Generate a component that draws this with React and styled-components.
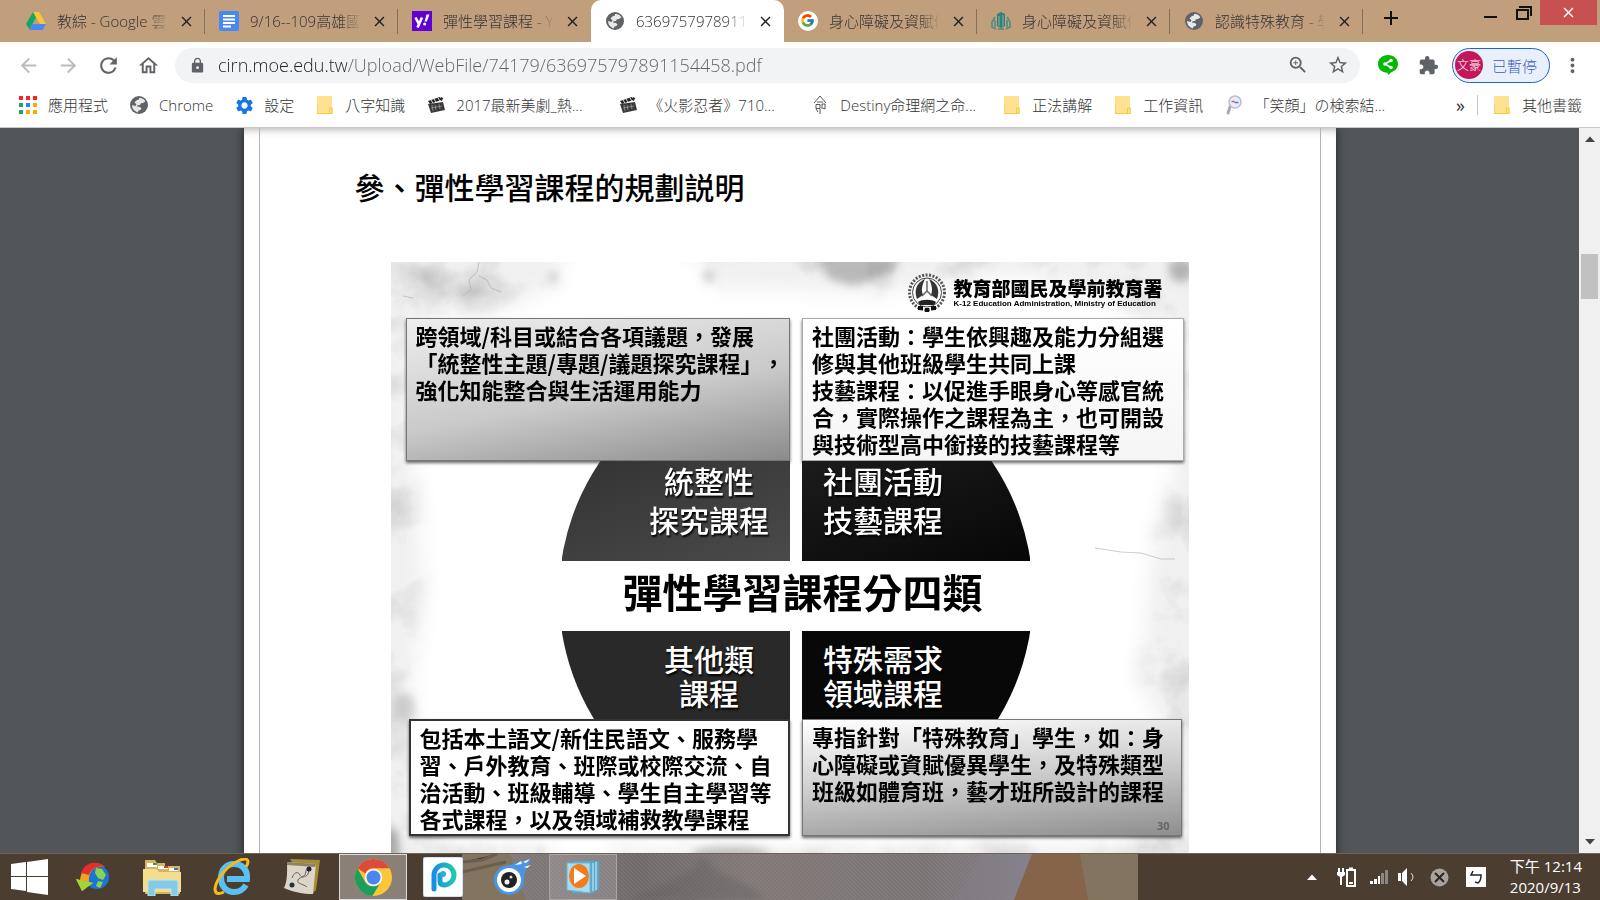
import React from 'react'
import styled, { createGlobalStyle } from 'styled-components'
import {
  MdArrowBack, MdArrowForward, MdRefresh, MdOutlineHome, MdLock, MdZoomIn,
  MdStarBorder, MdExtension, MdMoreVert, MdSettings, MdClose, MdAdd,
} from 'react-icons/md'
import { FcGoogle } from 'react-icons/fc'

const GlobalStyle = createGlobalStyle`
  * { box-sizing: border-box; }
  body {
    margin: 0;
    font-family: "Open Sans", "Noto Sans CJK TC", sans-serif;
    font-size: 15px;
    font-weight: 300;
    color: #333;
  }
  button { font: inherit; color: inherit; border: 0; padding: 0; background: none; }
  a { color: inherit; text-decoration: none; }
  svg { display: block; flex: none; }
`
const Screen = styled.div`
  display: flex;
  flex-direction: column;
  height: 100vh;
  overflow: hidden;
  background: #fff;
`

/* browser chrome */
const TabStrip = styled.div`
  display: flex;
  height: 42px;
  padding-left: 12px;
  background: #c19f7d;
`
const TabBox = styled.div`
  flex: 0 1 193px;
  position: relative;
  display: flex;
  align-items: center;
  gap: 11px;
  min-width: 0;
  padding: 0 10px 0 14px;
  border-radius: 10px 10px 0 0;
  background: ${p => p.$active ? '#fff' : 'none'};
  &::after {
    content: '';
    position: absolute;
    right: 0;
    top: 9px;
    width: 1px;
    height: 25px;
    background: ${p => p.$line ? '#866f58' : 'none'};
  }
`
const TabLink = styled.a`
  flex: 1;
  display: flex;
  align-items: center;
  gap: 11px;
  min-width: 0;
`
const TabTitle = styled.span`
  flex: 1;
  overflow: hidden;
  white-space: nowrap;
  line-height: 24px;
  mask-image: linear-gradient(90deg, #000 82%, rgba(0, 0, 0, .15));
`
const IconButton = styled.button`
  display: grid;
  place-items: center;
  width: ${p => p.$w || 40}px;
  height: 36px;
  color: ${p => p.$color || '#5f6368'};
`
const CloseTab = styled(IconButton)`
  width: 18px;
  color: #222;
`
const WindowControls = styled.div`
  display: flex;
  align-items: flex-start;
  margin-left: auto;
  padding-right: 3px;
`
const WindowButton = styled.button`
  display: grid;
  place-items: center;
  width: ${p => p.$close ? 57 : 33}px;
  height: 25px;
  color: ${p => p.$close ? '#fff' : '#111'};
  background: ${p => p.$close ? '#c75050' : 'none'};
`
const Toolbar = styled.div`
  display: flex;
  align-items: center;
  height: 46px;
  padding: 0 8px;
`
const Omnibox = styled.label`
  flex: 1;
  display: flex;
  align-items: center;
  height: 35px;
  margin: 0 8px 0 7px;
  padding: 0 2px 0 14px;
  border-radius: 18px;
  background: #f1f3f4;
  color: #5f6368;
`
const Address = styled.input`
  flex: 1;
  min-width: 0;
  height: 30px;
  margin-left: 12px;
  padding: 0;
  border: 0;
  outline: 0;
  font: 300 18px "Open Sans", sans-serif;
  color: transparent;
  background: linear-gradient(90deg, #202124 129px, #5f6368 129px);
  background-clip: text;
`
const Profile = styled.button`
  display: flex;
  align-items: center;
  justify-content: space-between;
  width: 98px;
  height: 35px;
  margin: 0 2px 0 4px;
  padding: 0 12px 0 2px;
  border: 1px solid #1a66d0;
  border-radius: 18px;
  background: #e9f0fc;
  color: #3c5fc0;
`
const Avatar = styled.span`
  display: grid;
  place-items: center;
  width: 28px;
  height: 28px;
  border-radius: 50%;
  background: #c2185b;
  color: #fff;
  font-size: 12px;
`
const Bookmarks = styled.nav`
  display: flex;
  align-items: center;
  height: 40px;
  padding: 0 18px 5px;
  border-bottom: 1px solid #c8c8c8;
`
const Bookmark = styled.a`
  display: flex;
  align-items: center;
  gap: 10px;
  margin-right: ${p => p.$long ? 20 : 21}px;
  white-space: nowrap;
  &:last-child { margin: 0; }
`
const BookmarkIcon = styled.span`
  width: 20px;
  display: grid;
  place-items: center;
`
const BookmarkText = styled.span`
  width: ${p => p.$long ? '142px' : 'auto'};
  line-height: 24px;
`
const More = styled.button`
  margin-left: auto;
  padding-right: 12px;
  font-size: 18px;
  font-weight: 400;
  line-height: 24px;
`
const Divider = styled.span`
  width: 1px;
  height: 20px;
  margin-right: 14px;
  background: #c4c7cb;
`

/* document */
const Viewer = styled.div`
  flex: 1;
  display: flex;
  min-height: 0;
  background: #525659;
`
const Canvas = styled.main`
  flex: 1;
  overflow: hidden;
`
const Page = styled.article`
  max-width: 1092px;
  min-height: 100%;
  margin: 0 auto;
  padding: 0 15px;
  background: #fff;
  box-shadow: 0 0 9px #222, inset 0 8px 8px -7px #aaa;
`
const PageInner = styled.div`
  padding: 38px 131px 0;
  border: solid #b4b4b4;
  border-width: 0 1px;
`
const Heading = styled.h1`
  margin: 0 0 56px -36px;
  font-family: "Noto Sans CJK TC", sans-serif;
  font-size: 30px;
  font-weight: 500;
  line-height: 40px;
  color: #000;
`
const Slide = styled.section`
  position: relative;
  isolation: isolate;
  height: 604px;
  font-family: "Noto Sans CJK TC", sans-serif;
  text-spacing-trim: space-all;
  color: #000;
`
const Marble = styled.svg`
  position: absolute;
  inset: 0;
  z-index: -1;
  width: 100%;
  height: 100%;
`
const SlideHeader = styled.header`
  display: flex;
  justify-content: flex-end;
  align-items: center;
  gap: 7px;
  height: 56px;
  padding: 6px 26px 0 0;
`
const Ministry = styled.div`
  font-size: 19px;
  font-weight: 900;
  line-height: 22px;
`
const MinistryEn = styled.div`
  font-family: "Liberation Sans", sans-serif;
  font-size: 8px;
  font-weight: 700;
  line-height: 10px;
`
const Pair = styled.div`
  display: grid;
  grid-template-columns: 385fr 382fr;
  gap: 12px;
  padding: 0 5px 0 15px;
`
const Note = styled.div`
  position: relative;
  min-height: ${p => p.$low ? 117 : 143}px;
  margin: ${p => p.$inset || '0'};
  padding: 3px 0 0 9px;
  border: ${p => p.$border || '1px solid #777'};
  background: ${p => p.$bg};
  box-shadow: 0 2px 3px rgba(0, 0, 0, .6);
  font-size: 22px;
  font-weight: 700;
  line-height: 27px;
  white-space: nowrap;
`
const Line = styled.div``
const PageNumber = styled.span`
  position: absolute;
  right: 11px;
  bottom: 2px;
  font-family: "Open Sans", sans-serif;
  font-size: 11px;
  line-height: 14px;
  color: #666;
`
const Wedge = styled.div`
  display: flex;
  flex-direction: column;
  justify-content: ${p => p.$low ? 'center' : 'flex-start'};
  align-items: ${p => p.$right ? 'flex-start' : 'flex-end'};
  justify-self: ${p => p.$right ? 'start' : 'end'};
  width: 228px;
  height: ${p => p.$low ? 88 : 100}px;
  padding: 0 20px;
  background: ${p => p.$bg};
  clip-path: circle(237px at ${p => p.$right ? '-6px' : '234px'} ${p => p.$low ? '-36px' : '134px'});
  color: #fff;
  font-size: 30px;
  font-weight: 500;
  line-height: ${p => p.$low ? 34 : 39}px;
  text-align: center;
  text-shadow: 1px 2px 2px #000;
`
const WedgeLabel = styled.div`
  min-width: 122px;
`
const SlideTitle = styled.h2`
  margin: 0;
  font-size: 40px;
  font-weight: 700;
  line-height: 60px;
  height: 70px;
  text-align: center;
  padding-left: 26px;
`
const Scrollbar = styled.div`
  display: flex;
  flex-direction: column;
  align-items: center;
  width: 21px;
  padding: 8px 0;
  background: #f0f0f0;
`
const Thumb = styled.div`
  width: 17px;
  height: 45px;
  margin: 112px 0 auto;
  background: #c1c1c1;
`

/* taskbar */
const TaskbarBox = styled.footer`
  position: relative;
  isolation: isolate;
  display: flex;
  height: 47px;
  border-top: 1px solid #6f6357;
  background: #4c3d31;
  color: #fff;
`
const Wallpaper = styled.svg`
  position: absolute;
  z-index: -1;
  left: 462px;
  top: 0;
`
const TaskButton = styled.button`
  display: grid;
  place-items: center;
  width: ${p => p.$start ? 59 : 68}px;
  margin-right: ${p => p.$start ? 0 : 2}px;
  border: 1px solid ${p => p.$active ? '#ddd' : p.$open ? '#aaa5a2' : 'transparent'};
  background: ${p => p.$active ? '#8b8078' : p.$open ? 'rgba(255,255,255,.15)' : 'none'};
`
const Tray = styled.div`
  display: flex;
  align-items: center;
  margin-left: auto;
  padding-right: 18px;
`
const TrayButton = styled.button`
  display: grid;
  place-items: center;
  width: ${p => p.$w}px;
  height: 40px;
`
const Clock = styled.div`
  margin-left: 8px;
  line-height: 21px;
  font-weight: 400;
`

const Globe = () => (
  <svg width="20" height="20" viewBox="0 0 20 20">
    <circle cx="10" cy="10" r="9" fill="#5f6368" />
    <path d="M10 3c3-.3 5.400 1 6.300 3.500L14 8l-2 .2-1 1.800-2.500.2-.5 1.300 3 .5 1.500 1.600-1 1.400-2 .6-.7 1.800C5.500 16.500 3 13.500 3 10l3.500 1 1-1.500-2-2.200L8 5l2-.4z" fill="#fff" opacity=".85" />
  </svg>
)
const Drive = () => (
  <svg width="20" height="18" viewBox="0 0 20 18">
    <path d="M7 0h6l7 12h-6z" fill="#fbc834" />
    <path d="M7 0l3 5.500L3.500 17.500 0 12z" fill="#11a861" />
    <path d="M6.500 12H20l-3.500 6h-13z" fill="#4688f4" />
  </svg>
)
const Docs = () => (
  <svg width="20" height="20" viewBox="0 0 20 20">
    <rect width="20" height="20" rx="2" fill="#4688f4" />
    <path d="M4 5h12M4 8.500h12M4 12h12M4 15.500h8" stroke="#fff" strokeWidth="1.800" />
  </svg>
)
const Yahoo = () => (
  <svg width="20" height="20" viewBox="0 0 20 20">
    <rect width="20" height="20" fill="#5f01d1" />
    <path d="M3.500 6.500l3.200 6M10 6.500L5.500 16.500" stroke="#fff" strokeWidth="2.600" />
    <path d="M14.500 3.500h3l-2.700 7h-2.200z" fill="#fff" />
    <circle cx="12.600" cy="13" r="1.500" fill="#fff" />
  </svg>
)
const GoogleMark = () => (
  <svg width="20" height="20" viewBox="0 0 20 20">
    <circle cx="10" cy="10" r="10" fill="#fff" />
    <FcGoogle x="2" y="2" width="16" height="16" />
  </svg>
)
const School = () => (
  <svg width="20" height="20" viewBox="0 0 20 20">
    <path d="M6 3l4-2 4 2v12l-4 2-4-2z" fill="#2f8276" />
    <path d="M8 5v10M12 4v11" stroke="#8fb0a0" />
    <path d="M4 6L1 11v5l4 2M16 6l3 5v5l-4 2M4 9v7M16 9v7M7 18h6" stroke="#4e8d7f" strokeWidth="1.600" fill="none" />
  </svg>
)
const Apps = () => (
  <svg width="18" height="18" viewBox="0 0 18 18">
    {['#f22', '#f22', '#f22', '#1ea362', '#2684fc', '#fbab00', '#1ea362', '#fbab00', '#fbab00'].map((c, i) => (
      <rect key={i} x={(i % 3) * 7} y={Math.floor(i / 3) * 7} width="4" height="4" fill={c} />
    ))}
  </svg>
)
const Folder = () => (
  <svg width="16" height="18" viewBox="0 0 16 18">
    <path d="M0 0h15v11l1 1v6H0z" fill="#ffe291" />
    <path d="M0 8v9.500h13M12.500 17v-4a1 1 0 0 1 2.500 0v4.500h-2" fill="none" stroke="#f2ca3c" />
  </svg>
)
const Clapper = () => (
  <svg width="18" height="18" viewBox="0 0 18 18">
    <path d="M1 5l12-4 1 3L3 8zM14 1l2 1-1 3-2-1z" fill="#222" />
    <path d="M1 8l15-2 2 8-14 3z" fill="#3a3a3a" />
    <path d="M4 4l2 3M7 3l2 3M11 2l2 3" stroke="#ddd" />
    <path d="M5 9l1 6M8 9l1 5M12 8l1 5M4 12l11-2" stroke="#999" strokeWidth=".8" />
  </svg>
)
const Fate = () => (
  <svg width="14" height="20" viewBox="0 0 14 20" fill="none" stroke="#555">
    <path d="M7 1L1 8M7 1l6 7M4 7h6M3 9.500h4v4H3zM9 9h3v5l-2-1M9 9v5M7 14v5M3 14l2 3" />
  </svg>
)
const Lens = () => (
  <svg width="16" height="20" viewBox="0 0 16 20">
    <path d="M4 12L2 18" stroke="#a9a9b5" strokeWidth="3" strokeLinecap="round" />
    <circle cx="9" cy="7" r="6" fill="#e9ebf5" stroke="#b9bccb" strokeWidth="1.500" />
    <path d="M5.500 6.500h3" stroke="#d55" strokeWidth="1.500" /><path d="M8.500 7.500h4" stroke="#57b" strokeWidth="1.500" />
  </svg>
)
const ShareBubble = () => (
  <svg width="20" height="20" viewBox="0 0 20 20">
    <path d="M10 0c6 0 10 4 10 9 0 4-3 7-7 8.500L10 20l-.5-2.300C4 17.500 0 14 0 9s4-9 10-9z" fill="#00b900" />
    <path d="M13 5.500L7 9l6 3.500" stroke="#fff" strokeWidth="1.500" fill="none" />
    <circle cx="13" cy="5.500" r="1.800" fill="#fff" /><circle cx="7" cy="9" r="1.800" fill="#fff" /><circle cx="13" cy="12.500" r="1.800" fill="#fff" />
  </svg>
)
const Emblem = () => (
  <svg width="38" height="40" viewBox="0 0 38 40" fill="none">
    <circle cx="19" cy="19.500" r="17.500" stroke="#555" strokeWidth="3" strokeDasharray="2 1.500" />
    <circle cx="19" cy="19.500" r="14.500" stroke="#444" />
    <path d="M17 6C8 10 6 18 9 26l6-4c-2-5-1-10 2-16zM21 6c9 4 11 12 8 20l-6-4c2-5 1-10-2-16z" fill="#333" />
    <path d="M19 8v10l-5 5M19 18l5 5" stroke="#666" strokeWidth="1.500" />
    <path d="M10 29c4-3 14-3 18 0l-2 3H12z" fill="#222" />
    <path d="M10 35h5M17 37h4M23 35h5" stroke="#111" strokeWidth="4" />
  </svg>
)
const Triangle = ({ down, color = '#444' }) => (
  <svg width="10" height="6" viewBox="0 0 10 6">
    <path d={down ? 'M0 0h10L5 5.500z' : 'M0 6h10L5 .5z'} fill={color} />
  </svg>
)

const MarbleArt = () => (
  <Marble viewBox="0 0 798 604" preserveAspectRatio="none" aria-hidden="true">
    <defs>
      <filter id="grain" x="0" y="0" width="100%" height="100%">
        <feTurbulence type="fractalNoise" baseFrequency=".018" numOctaves="5" seed="8" />
        <feColorMatrix values="0 0 0 0 .5  0 0 0 0 .5  0 0 0 0 .5  1.600 0 0 0 -.72" />
      </filter>
      <filter id="soft"><feGaussianBlur stdDeviation="10" /></filter>
      <filter id="edge"><feGaussianBlur stdDeviation="4" /></filter>
      <mask id="rim">
        <g filter="url(#soft)" fill="#fff">
          <path d="M-30-30H168V20L120 45 20 58V180L32 320 20 420 28 560 60 582H160V640H-30z" />
          <path d="M285-30H830V640H220V585L480 590 600 582 740 585 786 500 750 420 760 300 786 200V60L640 12 480 30 330 26z" />
        </g>
      </mask>
    </defs>
    <rect width="798" height="604" fill="#fff" />
    <g mask="url(#rim)">
      <rect width="798" height="604" fill="#f0f0f0" />
      <rect width="798" height="604" filter="url(#grain)" />
    </g>
    <g filter="url(#edge)" fill="#777">
      <path d="M430-6h80l-8 16-40 14-26-8z" opacity=".45" />
      <ellipse cx="790" cy="8" rx="12" ry="12" opacity=".5" />
      <ellipse cx="318" cy="14" rx="6" ry="6" opacity=".35" />
      <ellipse cx="35" cy="14" rx="4" ry="6" opacity=".4" />
      <ellipse cx="162" cy="15" rx="5" ry="5" opacity=".35" />
      <ellipse cx="78" cy="30" rx="12" ry="4" opacity=".3" />
      <ellipse cx="12" cy="445" rx="12" ry="14" opacity=".3" />
      <ellipse cx="340" cy="592" rx="40" ry="8" opacity=".4" />
      <ellipse cx="0" cy="585" rx="8" ry="20" opacity=".6" />
    </g>
    <path d="M88 0l-2 10-8 8 2 10-8 6M88 14l8 4 4 8 10 4M12 34l10 2M704 286l26 4 20 1 20 6 14 0" stroke="#aaa" fill="none" opacity=".6" />
  </Marble>
)

const tabs = [
  { title: '教綜 - Google 雲', icon: <Drive />, line: true },
  { title: '9/16--109高雄國', icon: <Docs />, line: true },
  { title: '彈性學習課程 - Y', icon: <Yahoo /> },
  { title: '6369757978911', icon: <Globe />, active: true },
  { title: '身心障礙及資賦優', icon: <GoogleMark />, line: true },
  { title: '身心障礙及資賦優', icon: <School />, line: true },
  { title: '認識特殊教育 - 學', icon: <Globe />, line: true },
]
const bookmarks = [
  { text: '應用程式', icon: <Apps /> },
  { text: 'Chrome', icon: <Globe /> },
  { text: '設定', icon: <MdSettings size={21} color="#1a73e8" /> },
  { text: '八字知識', icon: <Folder /> },
  { text: '2017最新美劇_熱...', icon: <Clapper />, long: true },
  { text: '《火影忍者》710...', icon: <Clapper />, long: true },
  { text: 'Destiny命理網之命...', icon: <Fate />, long: true },
  { text: '正法講解', icon: <Folder /> },
  { text: '工作資訊', icon: <Folder /> },
  { text: '「笑顔」の検索結...', icon: <Lens /> },
]
const notes = {
  inquiry: ['跨領域/科目或結合各項議題，發展', '「統整性主題/專題/議題探究課程」，', '強化知能整合與生活運用能力'],
  clubs: ['社團活動：學生依興趣及能力分組選', '修與其他班級學生共同上課', '技藝課程：以促進手眼身心等感官統', '合，實際操作之課程為主，也可開設', '與技術型高中銜接的技藝課程等'],
  others: ['包括本土語文/新住民語文、服務學', '習、戶外教育、班際或校際交流、自', '治活動、班級輔導、學生自主學習等', '各式課程，以及領域補救教學課程'],
  special: ['專指針對「特殊教育」學生，如：身', '心障礙或資賦優異學生，及特殊類型', '班級如體育班，藝才班所設計的課程'],
}

const Lines = ({ of }) => of.map(text => <Line key={text}>{text}</Line>)

const Tab = ({ title, icon, active, line }) => (
  <TabBox $active={active} $line={line}>
    <TabLink href="#">
      {icon}
      <TabTitle>{title}</TabTitle>
    </TabLink>
    <CloseTab aria-label="關閉分頁"><MdClose size={17} /></CloseTab>
  </TabBox>
)

const Browser = () => (
  <header>
    <TabStrip>
      {tabs.map((tab, i) => <Tab key={i} {...tab} />)}
      <IconButton $w={56} $color="#111" aria-label="新分頁"><MdAdd size={24} /></IconButton>
      <WindowControls>
        <WindowButton aria-label="最小化">
          <svg width="14" height="14"><path d="M0 11h13" stroke="#111" strokeWidth="2" /></svg>
        </WindowButton>
        <WindowButton aria-label="還原">
          <svg width="16" height="14" fill="none" stroke="#111" strokeWidth="2">
            <path d="M1 4h11v9H1zM3 1h12v9" />
          </svg>
        </WindowButton>
        <WindowButton $close aria-label="關閉"><MdClose size={17} /></WindowButton>
      </WindowControls>
    </TabStrip>
    <Toolbar>
      <IconButton $color="#bbbcbe" aria-label="上一頁"><MdArrowBack size={23} /></IconButton>
      <IconButton $color="#bbbcbe" aria-label="下一頁"><MdArrowForward size={23} /></IconButton>
      <IconButton aria-label="重新載入"><MdRefresh size={25} /></IconButton>
      <IconButton aria-label="首頁"><MdOutlineHome size={23} /></IconButton>
      <Omnibox>
        <MdLock size={17} />
        <Address aria-label="網址" defaultValue="cirn.moe.edu.tw/Upload/WebFile/74179/636975797891154458.pdf" />
        <IconButton aria-label="縮放"><MdZoomIn size={22} /></IconButton>
        <IconButton aria-label="加入書籤"><MdStarBorder size={22} /></IconButton>
      </Omnibox>
      <IconButton aria-label="分享"><ShareBubble /></IconButton>
      <IconButton aria-label="擴充功能"><MdExtension size={21} /></IconButton>
      <Profile><Avatar>文豪</Avatar>已暫停</Profile>
      <IconButton aria-label="選單"><MdMoreVert size={23} /></IconButton>
    </Toolbar>
    <Bookmarks>
      {bookmarks.map(b => (
        <Bookmark href="#" key={b.text} $long={b.long}>
          <BookmarkIcon>{b.icon}</BookmarkIcon>
          <BookmarkText $long={b.long}>{b.text}</BookmarkText>
        </Bookmark>
      ))}
      <More>»</More>
      <Divider />
      <Bookmark href="#">
        <BookmarkIcon><Folder /></BookmarkIcon>
        <BookmarkText>其他書籤</BookmarkText>
      </Bookmark>
    </Bookmarks>
  </header>
)

const Document = () => (
  <Page>
    <PageInner>
      <Heading>參、彈性學習課程的規劃説明</Heading>
      <Slide>
        <MarbleArt />
        <SlideHeader>
          <Emblem />
          <div>
            <Ministry>教育部國民及學前教育署</Ministry>
            <MinistryEn>K-12 Education Administration, Ministry of Education</MinistryEn>
          </div>
        </SlideHeader>
        <Pair>
          <Note $bg="linear-gradient(170deg, #eee, #c9c9c9 55%, #8b8b8b)"><Lines of={notes.inquiry} /></Note>
          <Note $bg="linear-gradient(#fff, #f5f5f5)" $border="1px solid #aaa"><Lines of={notes.clubs} /></Note>
        </Pair>
        <Pair>
          <Wedge $bg="linear-gradient(160deg, #333, #4a4a4a)">
            <WedgeLabel>統整性<br />探究課程</WedgeLabel>
          </Wedge>
          <Wedge $right $bg="linear-gradient(160deg, #1c1c1c, #070707)">
            <WedgeLabel>社團活動<br />技藝課程</WedgeLabel>
          </Wedge>
        </Pair>
        <SlideTitle>彈性學習課程分四類</SlideTitle>
        <Pair>
          <Wedge $low $bg="#292929">
            <WedgeLabel>其他類<br />課程</WedgeLabel>
          </Wedge>
          <Wedge $low $right $bg="#080808">
            <WedgeLabel>特殊需求<br />領域課程</WedgeLabel>
          </Wedge>
        </Pair>
        <Pair>
          <Note $low $bg="#fff" $border="2px solid #333" $inset="0 0 0 3px"><Lines of={notes.others} /></Note>
          <Note $low $bg="linear-gradient(175deg, #fff, #ccc 50%, #8e8e8e)" $inset="0 2px 0 0">
            <Lines of={notes.special} />
            <PageNumber>30</PageNumber>
          </Note>
        </Pair>
      </Slide>
    </PageInner>
  </Page>
)

const Taskbar = () => (
  <TaskbarBox>
    <Wallpaper width="676" height="46" viewBox="0 0 676 46" aria-hidden="true">
      <defs>
        <linearGradient id="cloth">
          <stop offset="0" stopColor="#817a79" /><stop offset=".25" stopColor="#706a6b" />
          <stop offset=".45" stopColor="#817a78" /><stop offset=".8" stopColor="#7b7475" /><stop offset="1" stopColor="#85808a" />
        </linearGradient>
        <pattern id="weave" width="4" height="4" patternUnits="userSpaceOnUse">
          <path d="M0 0l4 4" stroke="#a09999" strokeWidth=".5" />
        </pattern>
        <filter id="fold"><feGaussianBlur stdDeviation="3" /></filter>
      </defs>
      <rect width="676" height="46" fill="#82745f" />
      <path d="M0 8l20-2 15-6M0 18l44-10" stroke="#5e503f" strokeWidth="3" opacity=".6" />
      <path d="M48 0H570L552 46H64z" fill="url(#cloth)" />
      <path d="M48 0H570L552 46H64z" fill="url(#weave)" opacity=".5" />
      <path d="M240 0c10 24 44 22 64 46H170c20-14 60-20 70-46z" fill="#625c5e" opacity=".35" filter="url(#fold)" />
      <path d="M520 0h50l-18 46h-60z" fill="#858089" opacity=".35" />
      <path d="M570 0h48l8 46h-74z" fill="#856449" />
    </Wallpaper>
    <TaskButton $start aria-label="開始">
      <svg width="37" height="36" viewBox="0 0 37 36" fill="#fff">
        <path d="M0 5l15-2v14H0zM16 3l21-3v17H16zM0 18h15v14L0 30zM16 18h21v18l-21-3z" />
      </svg>
    </TaskButton>
    <TaskButton aria-label="下載">
      <svg width="34" height="34" viewBox="0 0 34 34">
        <circle cx="21" cy="17" r="12" fill="#1976d2" />
        <path d="M20 8l6 1 4 6-3 5-5-2-3-5zM22 21l5 1-3 6-4-2z" fill="#8bd44a" />
        <path d="M29 7C22 0 6 2 4 20l-4-1 6 12 11-8-4-1C12 12 18 5 29 7z" fill="#f6a21c" />
        <path d="M29 7C22 0 9 1 5 13l8 2c2-6 8-10 16-8z" fill="#e3302a" />
        <path d="M4 20l-4-1 6 12 11-8-4-1z" fill="#9fd43b" />
      </svg>
    </TaskButton>
    <TaskButton aria-label="檔案總管">
      <svg width="42" height="38" viewBox="0 0 42 38">
        <path d="M3 2h10l2 3h8v3h15v28H3z" fill="#d7b560" />
        <path d="M5 5h10v4H5zM16 8h10v3H16zM27 10h9v3h-9z" fill="#fff" />
        <path d="M11 5h4v2h-4z" fill="#3a9d4a" /><path d="M22 8h4v2h-4z" fill="#d0402e" /><path d="M32 10h4v2h-4z" fill="#2f78c4" />
        <path d="M1 11h13l3 3h22v20H1z" fill="#f4dd8e" />
        <path d="M6 24q0-2 2-2h26q2 0 2 2v14h-7v-7H13v7H6z" fill="#85cbe6" stroke="#b9e6f4" />
      </svg>
    </TaskButton>
    <TaskButton aria-label="Internet Explorer">
      <svg width="40" height="38" viewBox="0 0 40 38" fill="none">
        <path d="M33 27c-3 5-7 7-12 7-8 0-13-6-13-14S13 6 21 6s14 6 13 15H14" stroke="#58c0f2" strokeWidth="6" />
        <path d="M33 9c5-8 0-10-8-6C14 8 3 21 2 31c0 6 5 5 9 3" stroke="#f5b91e" strokeWidth="3" />
      </svg>
    </TaskButton>
    <TaskButton aria-label="地圖筆記">
      <svg width="38" height="38" viewBox="0 0 38 38">
        <path d="M6 1l30 1-4 30-4 4z" fill="#a78c37" />
        <path d="M3 4l29 2-3 30C18 36 10 34 0 30 4 22 3 12 3 4z" fill="#dcd6c8" />
        <path d="M3 4l29 2-1 3L3 7z" fill="#8d8262" />
        <path d="M8 20c2-6 6-7 8-3s6 0 6-4 4-1 2 3-8 2-10 6 6 4 9 7" stroke="#666" fill="none" />
        <circle cx="25" cy="11" r="2.500" fill="#223" /><circle cx="8" cy="27" r="2.500" fill="#234" />
      </svg>
    </TaskButton>
    <TaskButton $active aria-label="Google Chrome">
      <svg width="37" height="37" viewBox="0 0 36 36">
        <circle cx="18" cy="18" r="18" fill="#fbc63a" />
        <path d="M2.400 9A18 18 0 0 1 33.600 9H18a9 9 0 0 0-8 5z" fill="#de4b3d" />
        <path d="M2.400 9a18 18 0 0 0 14.600 27l8-13.500a9 9 0 0 1-15 0z" fill="#1b9f5b" />
        <circle cx="18" cy="18" r="8.500" fill="#f4f4f4" /><circle cx="18" cy="18" r="6.800" fill="#4a86ee" />
      </svg>
    </TaskButton>
    <TaskButton aria-label="PhotoScape">
      <svg width="40" height="40" viewBox="0 0 40 40" fill="none">
        <defs><linearGradient id="pee"><stop stopColor="#178ee8" /><stop offset="1" stopColor="#1fc8b0" /></linearGradient></defs>
        <rect width="40" height="40" rx="3" fill="#fff" stroke="#9fc8ee" />
        <path d="M11 32V18a10 10 0 1 1 10 10q-4 0-4-4v-6" stroke="url(#pee)" strokeWidth="5" strokeLinecap="round" />
        <circle cx="20" cy="17" r="3" fill="#1fb2d5" />
      </svg>
    </TaskButton>
    <TaskButton aria-label="迅雷">
      <svg width="42" height="38" viewBox="0 0 42 38">
        <path d="M2 20C4 8 18 8 26 4l12-3c0 6-4 8-4 11-2 4-2 8-3 13z" fill="#4b95e6" />
        <circle cx="17" cy="22" r="15" fill="#4b95e6" />
        <circle cx="17" cy="22" r="12" fill="#fff" /><circle cx="17" cy="22" r="8" fill="#222" />
        <circle cx="15" cy="24" r="2.500" fill="#fff" /><circle cx="19" cy="19" r="1.500" fill="#ddd" />
        <path d="M23 7l6-4 1 3zM31 4l7-3-4 4zM32 9l7-2-4 3z" fill="#fff" />
      </svg>
    </TaskButton>
    <TaskButton $open aria-label="媒體播放">
      <svg width="34" height="34" viewBox="0 0 34 34">
        <path d="M8 1h25v28l-6 4H6z" fill="#5ba8ce" />
        <path d="M27 3v28M30 2v28" stroke="#d5eef8" />
        <path d="M1 3h23v30L1 30z" fill="#a9dcee" stroke="#6eb4d4" />
        <ellipse cx="13" cy="16" rx="10" ry="12" fill="#f27b1c" />
        <path d="M8 8l12 8-12 8z" fill="#fff" />
      </svg>
    </TaskButton>
    <Tray>
      <TrayButton $w={24} aria-label="顯示隱藏的圖示"><Triangle color="#fff" /></TrayButton>
      <TrayButton $w={46} aria-label="電源">
        <svg width="20" height="20" viewBox="0 0 20 20" fill="none" stroke="#fff" strokeWidth="2">
          <path d="M10 3h8v16h-8zM12 1.500h4M2 1v4M6 1v4" /><path d="M0 5h8v3L5 10v8H3v-8L0 8z" fill="#fff" stroke="none" /><path d="M12 16h4" />
        </svg>
      </TrayButton>
      <TrayButton $w={14} aria-label="網路">
        <svg width="18" height="14" viewBox="0 0 18 14">
          <path d="M0 11h3v3H0zM4 9h3v5H4zM8 6h2v8H8z" fill="#fff" /><path d="M11 3h3v11h-3zM15 0h3v14h-3z" fill="#8d8680" />
        </svg>
      </TrayButton>
      <TrayButton $w={46} aria-label="音量">
        <svg width="18" height="18" viewBox="0 0 18 18">
          <path d="M0 5h3v8H0zM4 5l5-5v18l-5-5z" fill="#fff" /><path d="M13 5q4 4 0 8" stroke="#ddd" fill="none" />
        </svg>
      </TrayButton>
      <TrayButton $w={20} aria-label="狀態">
        <svg width="19" height="19" viewBox="0 0 19 19">
          <circle cx="9.500" cy="9.500" r="9" fill="#aaa39c" /><path d="M5 5l9 9M14 5l-9 9" stroke="#2c241d" strokeWidth="2" />
        </svg>
      </TrayButton>
      <TrayButton $w={52} aria-label="輸入法">
        <svg width="20" height="20" viewBox="0 0 20 20">
          <rect width="20" height="20" fill="#fff" /><path d="M7 4L5 8h10q0 6-3 8l-3-1" stroke="#222" fill="none" strokeWidth="1.500" />
        </svg>
      </TrayButton>
      <Clock>下午 12:14<br />2020/9/13</Clock>
    </Tray>
  </TaskbarBox>
)

const App = () => {
  return (
    <Screen>
      <GlobalStyle />
      <Browser />
      <Viewer>
        <Canvas><Document /></Canvas>
        <Scrollbar>
          <Triangle />
          <Thumb />
          <Triangle down />
        </Scrollbar>
      </Viewer>
      <Taskbar />
    </Screen>
  )
}

export default App
